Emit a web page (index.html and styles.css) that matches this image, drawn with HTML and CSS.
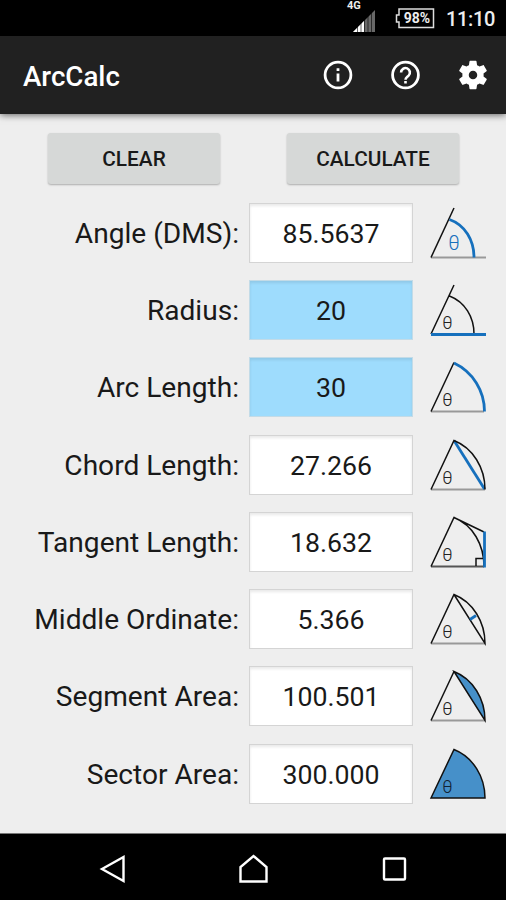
FILE: index.html
```html
<!DOCTYPE html>
<html lang="en">
<head>
<meta charset="utf-8">
<title>ArcCalc</title>
<link rel="stylesheet" href="styles.css">
</head>
<body>
<div class="status">
  <div class="signal"><span class="network">4G</span>
    <svg width="22" height="22" viewBox="0 0 22 22"><path d="M0 22 22 0V22Z" fill="#686868"/><path d="M0 22 11 11V22Z" fill="#fff"/><path d="M4.500 16v6M8 13v9M11.500 9v13M15 5v17M18.500 2v20" stroke="#000" stroke-width=".6"/></svg>
  </div>
  <div class="battery"><svg width="40" height="21" viewBox="0 0 40 21"><path d="M4 1H38.500V19.500H4V14H1.500V7H4Z" fill="none" stroke="#ddd" stroke-width="1.500"/></svg><span>98%</span></div>
  <span class="clock">11:10</span>
</div>
<header class="appbar">
  <h1>ArcCalc</h1>
  <svg class="action" viewBox="0 0 34 34"><circle cx="18" cy="17" r="12.900" fill="none" stroke="#fff" stroke-width="2.800"/><path d="M18 15.500V23.500M18 10.200V13" stroke="#fff" stroke-width="2.800"/></svg>
  <svg class="action" viewBox="0 0 34 34"><circle cx="17.500" cy="17" r="12.900" fill="none" stroke="#fff" stroke-width="2.800"/><path d="M13.100 14.500a4.400 4.400 0 1 1 7.500 3.100c-1.800 1.700-3.100 2.100-3.100 4.100M17.500 23V25.600" fill="none" stroke="#fff" stroke-width="2.600"/></svg>
  <svg class="action" viewBox="0 0 24 24"><path fill="#fff" d="M19.430 12.980c.04-.32.070-.640.070-.980s-.030-.660-.070-.980l2.110-1.650c.190-.150.240-.420.120-.640l-2-3.460c-.120-.220-.390-.300-.610-.220l-2.490 1c-.520-.400-1.080-.730-1.690-.980l-.380-2.650C14.460 2.180 14.250 2 14 2h-4c-.250 0-.460.180-.490.420l-.380 2.650c-.610.250-1.170.590-1.690.980l-2.490-1c-.230-.090-.490 0-.610.220l-2 3.460c-.130.220-.070.490.120.640l2.110 1.650c-.040.320-.070.650-.070.980s.030.660.070.980l-2.110 1.650c-.190.150-.240.420-.120.640l2 3.460c.120.220.390.300.610.220l2.490-1c.520.400 1.080.730 1.690.980l.380 2.650c.030.240.240.420.490.420h4c.250 0 .460-.180.490-.420l.380-2.650c.610-.250 1.170-.590 1.690-.980l2.490 1c.230.090.490 0 .610-.220l2-3.460c.120-.220.070-.490-.120-.640zM12 15a3 3 0 1 1 0-6 3 3 0 0 1 0 6z"/></svg>
</header>
<main>
  <div class="buttons"><button>CLEAR</button><button>CALCULATE</button></div>
  <div class="rows">
    <div class="row"><label>Angle (DMS):</label><div class="field">85.5637</div>
      <svg class="figure" viewBox="0 0 62 58"><path class="base" d="M3 53.500H58"/><path class="line" d="M3 53.500 26 4"/><path class="mark" d="M21.500 15.500C37 21 46 36 46 53.500"/><text class="theta blue" x="26" y="45.500">θ</text></svg></div>
    <div class="row"><label>Radius:</label><div class="field known">20</div>
      <svg class="figure" viewBox="0 0 62 58"><path class="line" d="M3 53 26 4M21.500 15C37 21 46 36 46 53"/><path class="mark" d="M3 53.500H58"/><text class="theta" x="19.500" y="48">θ</text></svg></div>
    <div class="row"><label>Arc Length:</label><div class="field known">30</div>
      <svg class="figure" viewBox="0 0 62 58"><path class="base" d="M3 53.500H56"/><path class="line" d="M3 53.500 26 4.500"/><path class="mark" d="M26 5C45 14 56.500 33 56.500 53.500"/><text class="theta" x="19.500" y="48">θ</text></svg></div>
    <div class="row"><label>Chord Length:</label><div class="field">27.266</div>
      <svg class="figure" viewBox="0 0 62 58"><path class="base" d="M3 53.500H57"/><path class="mark" d="M26 4.500 56.500 53"/><path class="line" d="M3 53.500 26 4.500C45 12 57 32 57 53.500"/><text class="theta" x="19.500" y="48">θ</text></svg></div>
    <div class="row"><label>Tangent Length:</label><div class="field">18.632</div>
      <svg class="figure" viewBox="0 0 62 58"><path class="base dark" d="M3 53.500H56"/><path class="line" d="M3 53.500 26 4.500C45 12 56 32 56 53.500M26 4.500 56 19M48 53V45.500H56"/><path class="mark" d="M56.500 18.500V54.500"/><text class="theta" x="19.500" y="48">θ</text></svg></div>
    <div class="row"><label>Middle Ordinate:</label><div class="field">5.366</div>
      <svg class="figure" viewBox="0 0 62 58"><path class="base" d="M3 53.500H57"/><path class="line" d="M3 53.500 26 4.500C45 12 57 32 57 53.500L26 4.500"/><path class="mark" d="M42 29.500 48 25.500"/><text class="theta" x="19.500" y="48">θ</text></svg></div>
    <div class="row"><label>Segment Area:</label><div class="field">100.501</div>
      <svg class="figure" viewBox="0 0 62 58"><path class="base" d="M3 53.500H57"/><path class="line filled" d="M26 4.500C45 12 57 32 57 53.500Z"/><path class="line" d="M3 53.500 26 4.500"/><text class="theta" x="19.500" y="48">θ</text></svg></div>
    <div class="row"><label>Sector Area:</label><div class="field">300.000</div>
      <svg class="figure" viewBox="0 0 62 58"><path class="line filled" d="M3 53 26 4.500C45 12 57 32 57 53Z"/><text class="theta on-fill" x="19.500" y="48">θ</text></svg></div>
  </div>
</main>
<nav class="navbar">
  <svg viewBox="0 0 32 32"><path d="M6 16 27.500 4V28Z"/></svg>
  <svg viewBox="0 0 32 32"><path d="M3.500 28.500V14L16.500 3 29.500 14V28.500Z"/></svg>
  <svg viewBox="0 0 32 32"><rect x="6" y="5.500" width="21" height="21" rx="1"/></svg>
</nav>
</body>
</html>
```
FILE: styles.css
```css
* { box-sizing: border-box; }
body {
  margin: 0;
  width: 506px;
  height: 900px;
  display: flex;
  flex-direction: column;
  overflow: hidden;
  background: #eee;
  font-family: Roboto, "Liberation Sans", sans-serif;
  color: #191919;
}
.status {
  height: 36px;
  background: #000;
  color: #eee;
  display: flex;
  justify-content: flex-end;
  align-items: center;
  padding-right: 11px;
  font-weight: 500;
}
.signal { width: 30px; height: 28px; position: relative; display: flex; align-items: flex-end; justify-content: flex-end; margin-right: 20px; }
.network { position: absolute; left: 2px; top: -4px; font-size: 11px; line-height: 12px; font-weight: 700; }
.battery { position: relative; width: 40px; height: 21px; margin-right: 11px; }
.battery svg { display: block; }
.battery span { position: absolute; left: 4px; right: 0; top: 0; text-align: center; font-size: 14px; line-height: 21px; font-weight: 700; }
.clock { font-size: 20px; line-height: 36px; padding-top: 2px; letter-spacing: -.35px; }
.appbar {
  height: 78px;
  flex: none;
  background: #212121;
  color: #fff;
  display: flex;
  align-items: center;
  padding: 0 16px 0 23px;
  gap: 34px;
  box-shadow: 0 1px 7px rgba(0, 0, 0, .6);
}
.appbar h1 { margin: 0 auto 0 0; padding-top: 3px; font-size: 27.7px; font-weight: 500; }
.action { width: 34px; height: 34px; flex: none; }
main { flex: 1; padding-top: 19px; }
.buttons { display: flex; gap: 67px; padding-left: 48px; }
button {
  width: 172px;
  height: 51px;
  border: 0;
  border-radius: 3px;
  background: #d6d8d7;
  box-shadow: 0 1px 2px rgba(0, 0, 0, .28);
  font: 500 20.8px Roboto, sans-serif;
  color: #191919;
}
.rows { display: grid; grid-auto-rows: 77.3px; padding-top: 10px; }
.row { display: grid; grid-template-columns: 239px 164px 62px; column-gap: 10px; align-items: center; }
.row label { padding-top: 1px; font-size: 28.1px; text-align: right; white-space: nowrap; }
.field {
  height: 60px;
  padding-top: 2px;
  border: 1px solid #d4d4d4;
  background: #fff;
  box-shadow: inset 0 2px 3px rgba(0, 0, 0, .09);
  display: flex;
  align-items: center;
  justify-content: center;
  font-size: 26.7px;
}
.field.known { background: #9edcfd; border-color: #c3dbe7; }
.figure { width: 62px; height: 58px; margin-left: 5px; }
.figure path { fill: none; }
.figure .line { stroke: #111; stroke-width: 1.5; }
.figure .base { stroke: #999; stroke-width: 2; }
.figure .dark { stroke: #555; }
.figure .mark { stroke: #1670bd; stroke-width: 2.8; }
.figure path.filled { fill: #4690c9; }
.theta { font: 300 18px Roboto, sans-serif; text-anchor: middle; fill: #222; }
.theta.blue { font-size: 20px; fill: #1670bd; }
.theta.on-fill { fill: #123; }
.navbar {
  height: 67px;
  flex: none;
  background: #000;
  border-top: 1px solid #777;
  display: flex;
  justify-content: center;
  align-items: center;
  gap: 109px;
  padding-top: 4px;
}
.navbar svg { width: 32px; height: 32px; fill: none; stroke: #fff; stroke-width: 2.4; }
```
